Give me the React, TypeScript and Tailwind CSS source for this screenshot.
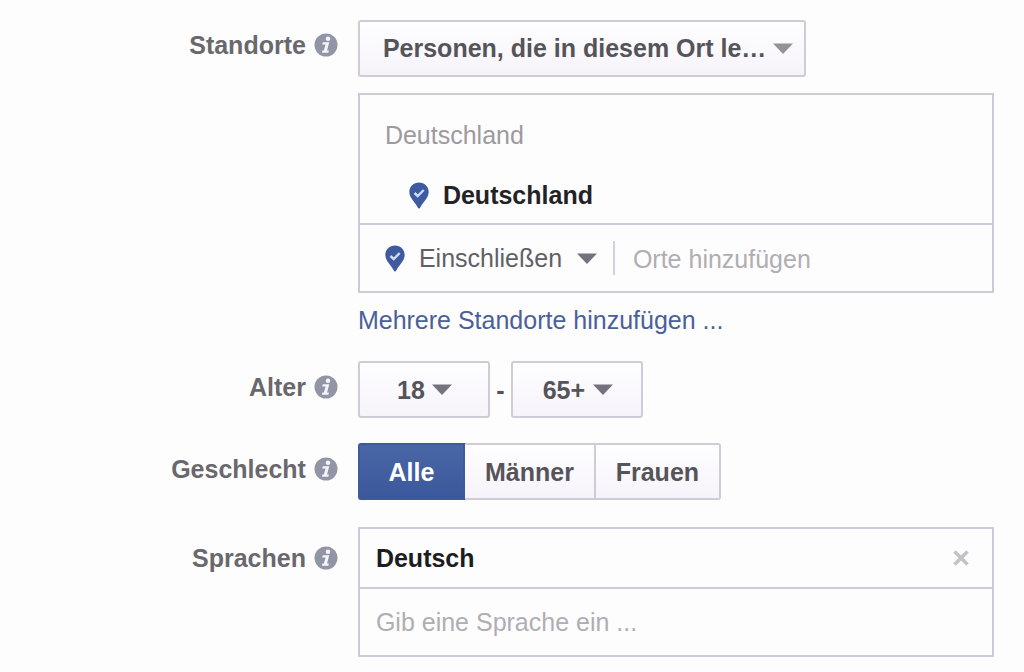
import type { ReactNode } from "react";

function InfoIcon() {
  return (
    <svg viewBox="0 0 24 24" className="size-6 shrink-0" aria-hidden="true">
      <circle cx="12" cy="12" r="11.5" fill="#9195a6" />
      <circle cx="14" cy="5.800" r="2.300" fill="#f4f5fa" />
      <path d="M8.800 9.200h6.500l-2.300 8.300h1.900l-.5 2.200H7.900l.5-2.200h1.500l1.700-6H8.200z" fill="#f4f5fa" />
    </svg>
  );
}

function PinIcon() {
  return (
    <svg viewBox="0 0 20 27" className="h-[27px] w-5 shrink-0" aria-hidden="true">
      <path
        d="M10 .5C4.600.5.3 4.600.3 9.800c0 3.200 1.500 5.700 3.500 8.400 2 2.700 3.800 4.900 4.900 7.400.5 1.200 2.100 1.200 2.600 0 1.100-2.500 2.900-4.700 4.900-7.400 2-2.700 3.500-5.200 3.500-8.400C19.700 4.600 15.400.5 10 .5z"
        fill="#3e5b9f"
      />
      <path d="M5.500 11l3.200 3 6-6" fill="none" stroke="#c9ddfa" strokeWidth="2.400" />
    </svg>
  );
}

function Caret({ className }: { className: string }) {
  return (
    <svg
      viewBox="0 0 20 11"
      className={`pointer-events-none col-start-1 row-start-1 h-[11px] w-5 self-center justify-self-end ${className}`}
      aria-hidden="true"
    >
      <path d="M0 .5h20L10 11z" fill="currentColor" />
    </svg>
  );
}

const buttonLook =
  "h-[57px] border-2 border-[#cfccd6] bg-linear-to-b from-[#fefdff] to-[#f6f4fa] font-bold text-[#555459]";

function Row({
  label,
  htmlFor,
  labelHeight = "h-[52px]",
  children,
}: {
  label: string;
  htmlFor?: string;
  labelHeight?: string;
  children: ReactNode;
}) {
  return (
    <div className="flex gap-5">
      <div
        className={`flex w-[33%] shrink-0 items-center justify-end gap-2 font-bold text-[#69686d] ${labelHeight}`}
      >
        {htmlFor ? <label htmlFor={htmlFor}>{label}</label> : <span>{label}</span>}
        <InfoIcon />
      </div>
      <div className="min-w-0 grow pr-[30px]">{children}</div>
    </div>
  );
}

function AgeSelect({
  id,
  label,
  value,
  options,
  caret,
}: {
  id: string;
  label: string;
  value: string;
  options: string[];
  caret: string;
}) {
  return (
    <div className="grid w-[132px]">
      <select
        id={id}
        aria-label={label}
        defaultValue={value}
        className={`${buttonLook} col-start-1 row-start-1 w-full appearance-none rounded-[3px] pr-[26px] text-center`}
      >
        {options.map((o) => (
          <option key={o}>{o}</option>
        ))}
      </select>
      <Caret className={caret} />
    </div>
  );
}

export default function App() {
  return (
    <main className="flex min-h-screen flex-col gap-[25px] bg-[#fefdfe] pt-5 pb-4 font-['Liberation_Sans',Arial,sans-serif] text-[25px] leading-8">
      <Row label="Standorte" htmlFor="ort-typ" labelHeight="h-[50px]">
        <div className="grid w-[448px] max-w-full">
          <select
            id="ort-typ"
            className={`${buttonLook} col-start-1 row-start-1 w-full appearance-none rounded-[3px] pr-9 pb-0.5 pl-[23px]`}
          >
            <option>Personen, die in diesem Ort le…</option>
          </select>
          <Caret className="mr-[13px] text-[#949297]" />
        </div>

        <div className="mt-4 border-2 border-[#cdcbd7]">
          <div className="flex h-[130px] flex-col justify-between border-b-2 border-[#cdcbd7] pt-6 pb-3 pl-[25px]">
            <div className="text-[#9c9a9f]">Deutschland</div>
            <div className="flex items-center gap-3.5 pl-6 font-bold text-[#232226]">
              <PinIcon />
              <span>Deutschland</span>
            </div>
          </div>
          <div className="flex h-[66px] items-center pl-[25px]">
            <PinIcon />
            <div className="grid w-[192px]">
              <select
                aria-label="Art der Auswahl"
                className="col-start-1 row-start-1 w-full appearance-none bg-transparent pl-3.5 text-[#616065]"
              >
                <option>Einschließen</option>
                <option>Ausschließen</option>
              </select>
              <Caret className="text-[#75727f]" />
            </div>
            <input
              type="text"
              aria-label="Orte hinzufügen"
              placeholder="Orte hinzufügen"
              className="ml-4 h-[34px] min-w-0 grow border-l-2 border-[#d3d1d9] bg-transparent pt-0.5 pl-[18px] outline-none placeholder:text-[#b0aeb3]"
            />
          </div>
        </div>
        <a href="#mehrere-standorte" className="mt-[11px] block w-fit text-[#4a609b]">
          Mehrere Standorte hinzufügen ...
        </a>
      </Row>

      <Row label="Alter" htmlFor="alter-von">
        <div className="flex items-center">
          <AgeSelect
            id="alter-von"
            label="Alter von"
            value="18"
            options={["13", "18", "21", "25", "35", "45", "55"]}
            caret="mr-[38px] text-[#75727f]"
          />
          <span className="w-[21px] text-center font-bold text-[#555459]">-</span>
          <AgeSelect
            id="alter-bis"
            label="Alter bis"
            value="65+"
            options={["25", "35", "45", "55", "65+"]}
            caret="mr-[30px] text-[#75727f]"
          />
        </div>
      </Row>

      <Row label="Geschlecht">
        <div className="flex" role="group" aria-label="Geschlecht">
          <button
            type="button"
            aria-pressed="true"
            className="h-[57px] w-[107px] rounded-l-[3px] border-2 border-[#3e5a98] bg-linear-to-b from-[#4966a6] to-[#3b589c] font-bold text-white"
          >
            Alle
          </button>
          <button type="button" aria-pressed="false" className={`${buttonLook} w-[131px] border-l-0`}>
            Männer
          </button>
          <button type="button" aria-pressed="false" className={`${buttonLook} w-[125px] rounded-r-[3px] border-l-0`}>
            Frauen
          </button>
        </div>
      </Row>

      <Row label="Sprachen" htmlFor="sprache" labelHeight="h-[66px]">
        <div className="mt-0.5 border-2 border-[#cdcbd7]">
          <div className="flex h-[60px] items-center justify-between border-b-2 border-[#cdcbd7] pr-[22px] pl-4">
            <span className="font-bold text-[#1d1c20]">Deutsch</span>
            <button type="button" aria-label="Deutsch entfernen" className="p-px">
              <svg viewBox="0 0 16 16" className="size-4" aria-hidden="true">
                <path d="M1.500 1.500l13 13M14.500 1.500l-13 13" stroke="#c4c2c9" strokeWidth="3.600" />
              </svg>
            </button>
          </div>
          <input
            id="sprache"
            type="text"
            placeholder="Gib eine Sprache ein ..."
            className="block h-[66px] w-full bg-transparent px-4 outline-none placeholder:text-[#b0aeb3]"
          />
        </div>
      </Row>
    </main>
  );
}
